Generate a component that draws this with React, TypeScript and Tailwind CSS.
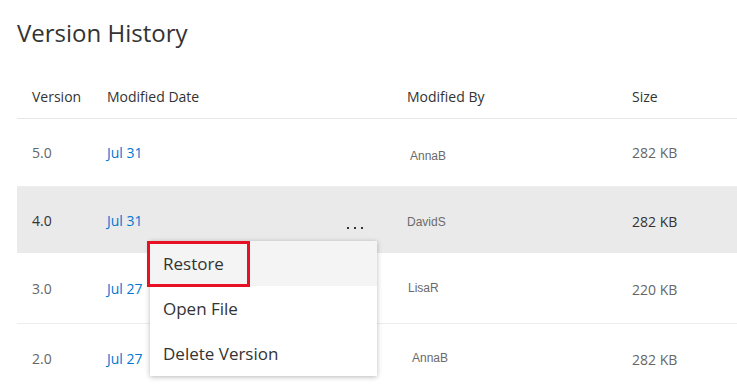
type VersionRow = {
  version: string;
  date: string;
  by: string;
  byOffset: string;
  size: string;
  height: string;
  active?: boolean;
  last?: boolean;
};

const rows: VersionRow[] = [
  { version: '5.0', date: 'Jul 31', by: 'AnnaB', byOffset: 'pl-[3px] pt-[6px]', size: '282 KB', height: 'h-[68px]' },
  { version: '4.0', date: 'Jul 31', by: 'DavidS', byOffset: 'pl-0 pt-[3px]', size: '282 KB', height: 'h-[66px]', active: true },
  { version: '3.0', date: 'Jul 27', by: 'LisaR', byOffset: 'pl-[1px] pt-0', size: '220 KB', height: 'h-[71px]' },
  { version: '2.0', date: 'Jul 27', by: 'AnnaB', byOffset: 'pl-[5px] pt-0', size: '282 KB', height: 'h-[68px]', last: true },
];

const menuItems = ['Restore', 'Open File', 'Delete Version'];

const App = () => {
  return (
    <div className="relative w-[737px] h-[387px] overflow-hidden bg-white font-['Open_Sans',sans-serif] text-[#333]">
      <h1 className="ml-[17px] pt-[16px] text-[24px] leading-[34px] font-normal text-[#333]">
        Version History
      </h1>

      <div className="ml-[17px] mt-[25px]">
        <div className="grid grid-cols-[75px_300px_225px_1fr] pl-[15px] h-[44px] items-center border-b border-[#e6e6e6] text-[14px] text-[#333]">
          <span>Version</span>
          <span>Modified Date</span>
          <span>Modified By</span>
          <span>Size</span>
        </div>

        {rows.map(row => (
          <div
            key={row.version}
            className={`grid grid-cols-[75px_300px_225px_1fr] pl-[15px] items-center text-[14px] ${row.height} ${
              row.active ? 'bg-[#eaeaea] text-[#333]' : 'text-[#666]'
            } ${row.last || row.active ? '' : 'border-b border-[#ededed]'}`}
          >
            <span>{row.version}</span>
            <div className="flex items-center justify-between pr-[44px]">
              <span className="text-[#0078d4]">{row.date}</span>
              {row.active && (
                <span className="flex gap-[5px] pt-[16px]">
                  <i className="block w-[2px] h-[2px] bg-[#333]"></i>
                  <i className="block w-[2px] h-[2px] bg-[#333]"></i>
                  <i className="block w-[2px] h-[2px] bg-[#333]"></i>
                </span>
              )}
            </div>
            <span className={`font-['Liberation_Sans',sans-serif] text-[12px] text-[#6a6a6a] ${row.byOffset}`}>
              {row.by}
            </span>
            <span className={row.version === '5.0' ? '' : 'pt-[2px]'}>{row.size}</span>
          </div>
        ))}
      </div>

      <div className="absolute left-[150px] top-[241px] w-[227px] bg-white shadow-[0_1px_5px_rgba(0,0,0,0.28)]">
        {menuItems.map((item, i) => (
          <div
            key={item}
            className={`h-[45px] flex items-center pl-[13px] text-[17px] text-[#333] ${i === 0 ? 'bg-[#f4f4f4]' : ''}`}
          >
            {item}
          </div>
        ))}
        <div className="absolute left-[-3px] top-0 w-[103px] h-[46px] border-[3px] border-[#e81123]"></div>
      </div>
    </div>
  );
};

export default App;
